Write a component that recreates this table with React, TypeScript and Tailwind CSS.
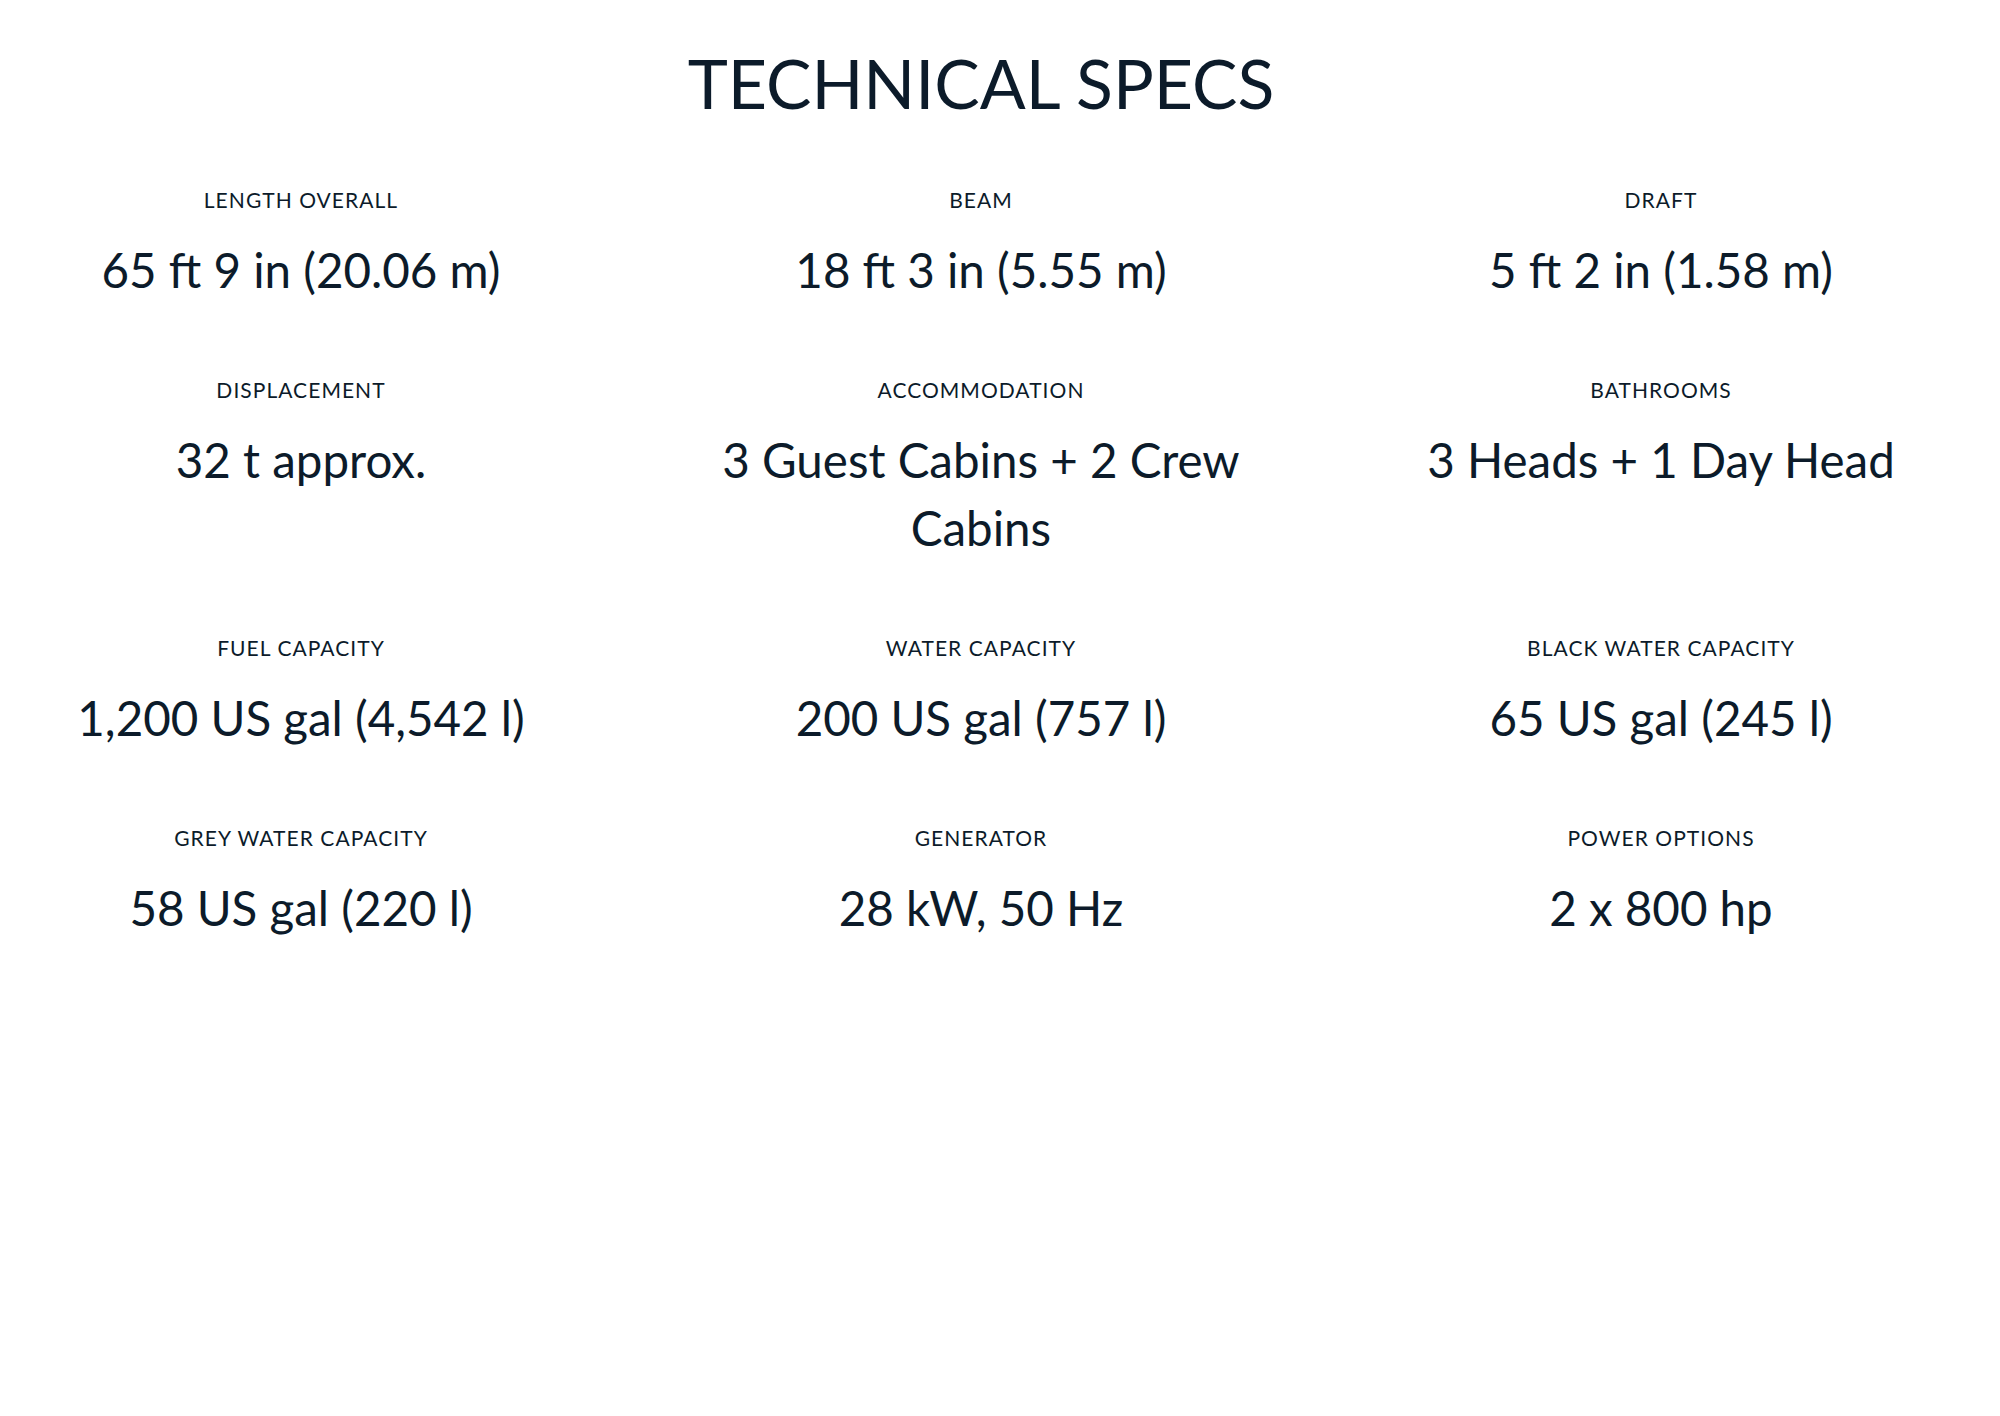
import React from 'react';

const specs: { label: string; value: string }[] = [
  { label: 'LENGTH OVERALL', value: '65 ft 9 in (20.06 m)' },
  { label: 'BEAM', value: '18 ft 3 in (5.55 m)' },
  { label: 'DRAFT', value: '5 ft 2 in (1.58 m)' },
  { label: 'DISPLACEMENT', value: '32 t approx.' },
  { label: 'ACCOMMODATION', value: '3 Guest Cabins + 2 Crew Cabins' },
  { label: 'BATHROOMS', value: '3 Heads + 1 Day Head' },
  { label: 'FUEL CAPACITY', value: '1,200 US gal (4,542 l)' },
  { label: 'WATER CAPACITY', value: '200 US gal (757 l)' },
  { label: 'BLACK WATER CAPACITY', value: '65 US gal (245 l)' },
  { label: 'GREY WATER CAPACITY', value: '58 US gal (220 l)' },
  { label: 'GENERATOR', value: '28 kW, 50 Hz' },
  { label: 'POWER OPTIONS', value: '2 x 800 hp' },
];

export default function App() {
  return (
    <div className="min-h-screen w-[1962px] bg-white text-[#0c1b2a] font-['Lato','Liberation_Sans',sans-serif]">
      <section className="pt-[43px] pb-20">
        <h2 className="text-center text-[68px] leading-[80px] font-normal">TECHNICAL SPECS</h2>

        <div className="mt-[65px] pl-px grid grid-cols-[600px_600px_600px] gap-x-[80px] gap-y-[74px]">
          {specs.map((s) => (
            <div key={s.label} className="flex flex-col items-center text-center">
              <div className="text-[21px] leading-[24px] tracking-[0.05em]">{s.label}</div>
              <div className="mt-[24px] text-[47.5px] leading-[68px]">{s.value}</div>
            </div>
          ))}
        </div>
      </section>
    </div>
  );
}
